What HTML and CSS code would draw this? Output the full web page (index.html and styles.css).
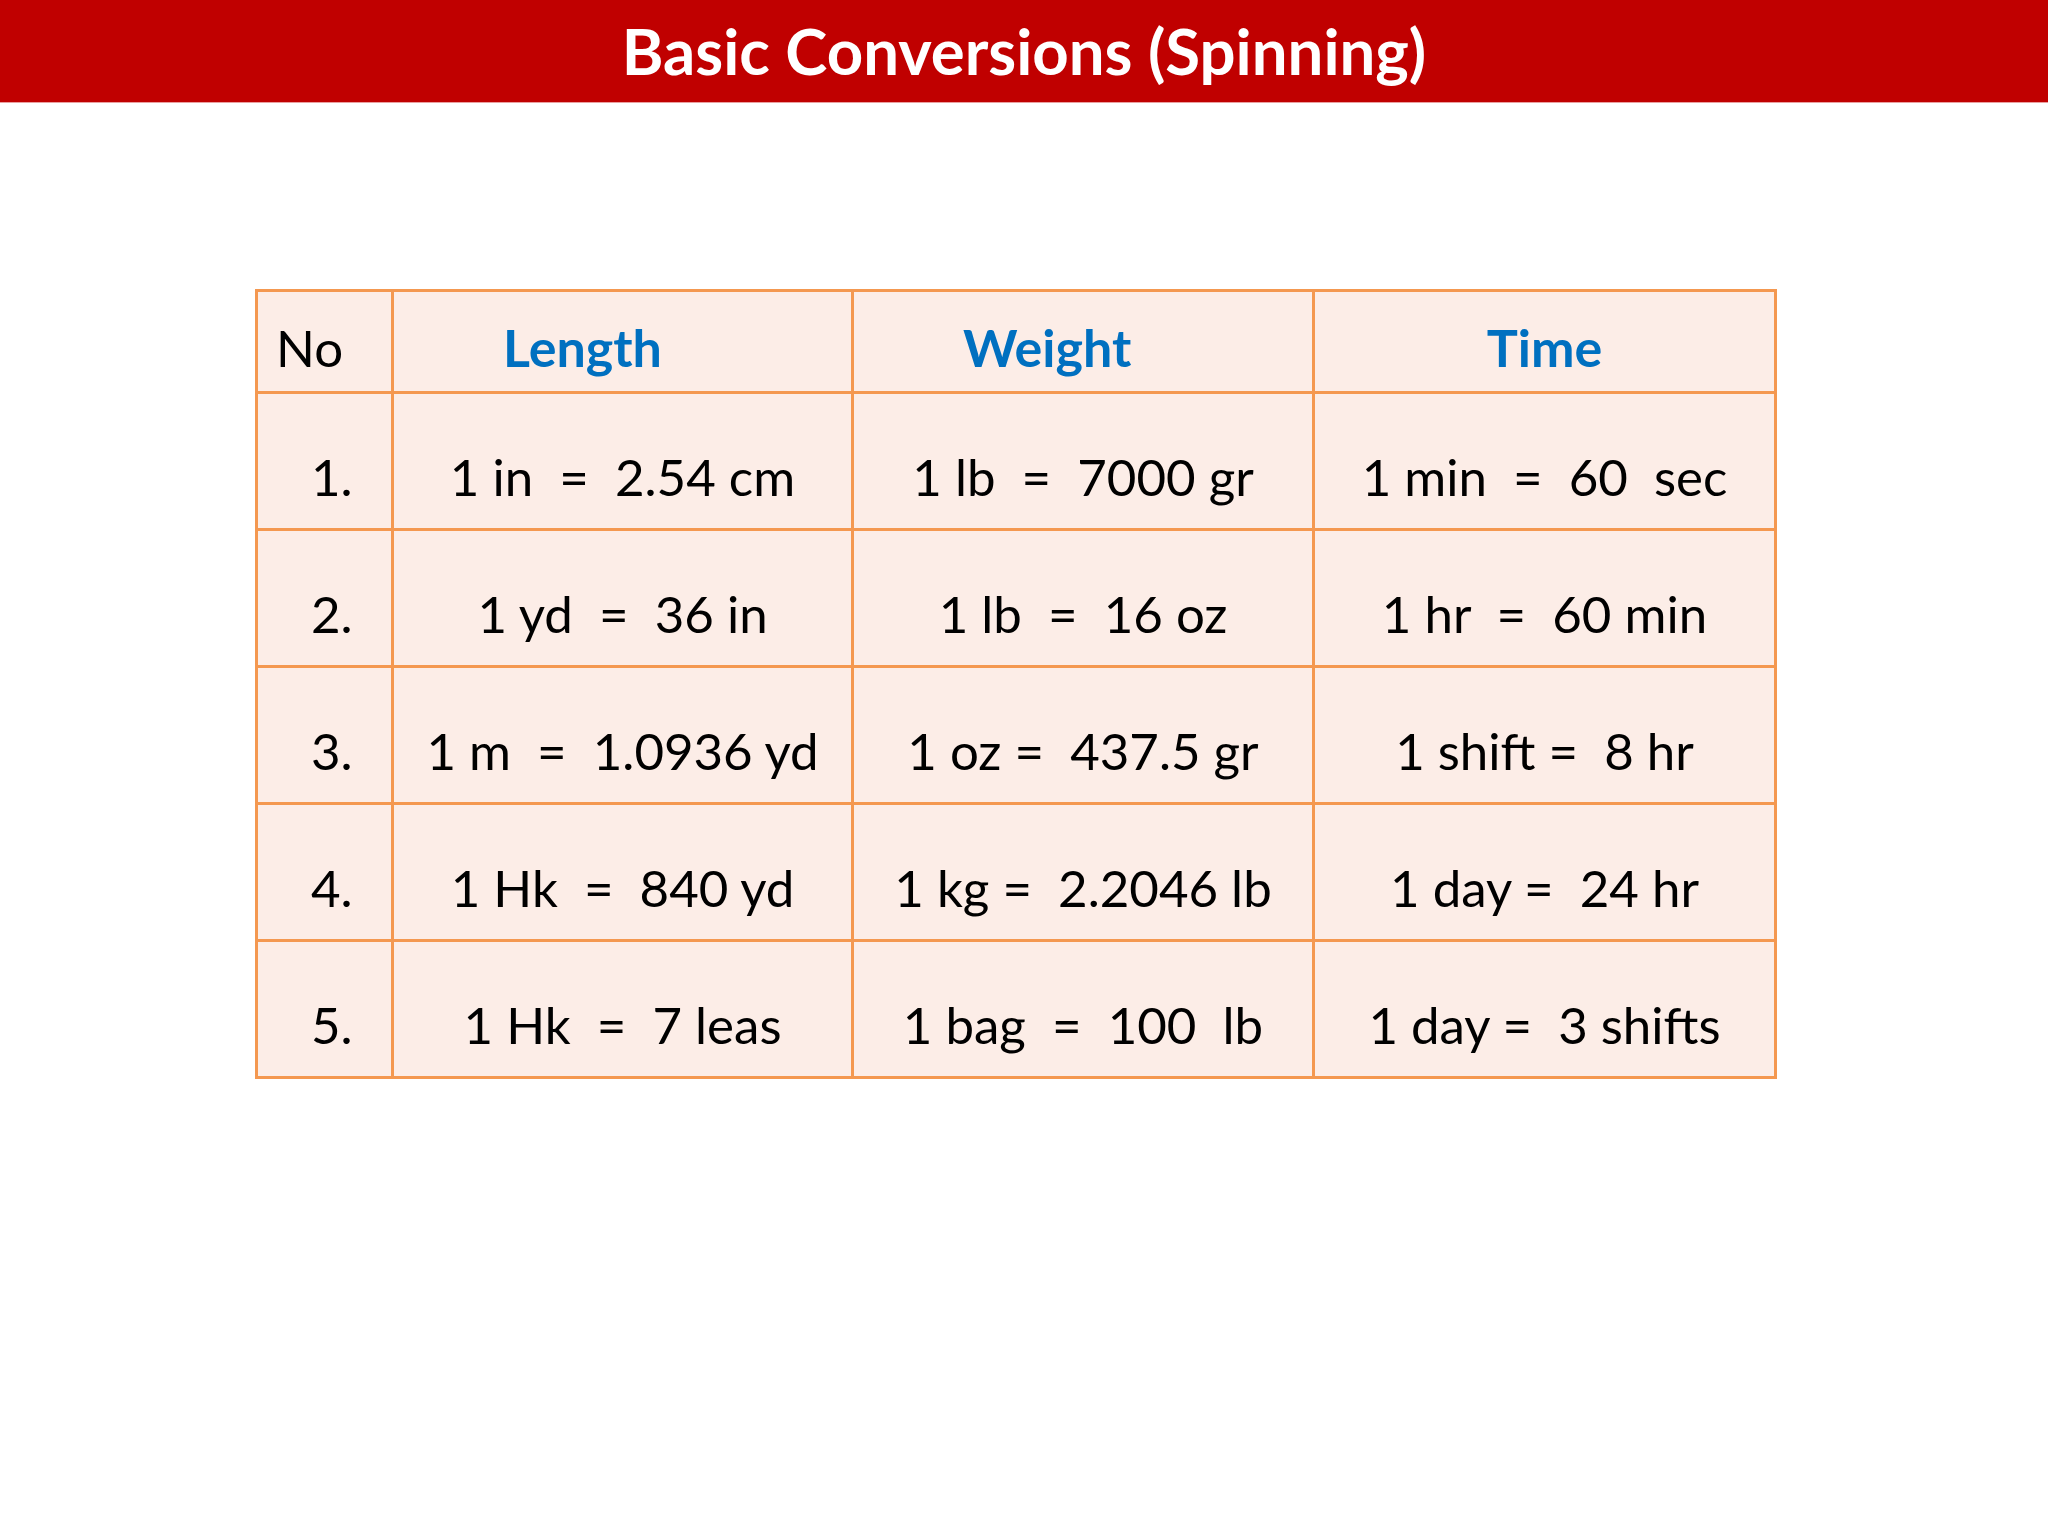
FILE: index.html
```html
<!DOCTYPE html>
<html>
<head>
<meta charset="utf-8">
<link rel="stylesheet" href="styles.css">
</head>
<body>
<header class="title-bar"><h1 class="title">Basic Conversions (Spinning)</h1></header>
<main class="content">
<table class="conv">
<colgroup><col class="c-no"><col class="c-len"><col class="c-wt"><col class="c-time"></colgroup>
<thead>
<tr class="head-row"><th class="no-head">No</th><th class="h-left">Length</th><th class="h-left">Weight</th><th class="h-center">Time</th></tr>
</thead>
<tbody>
<tr><td class="num">1.</td><td>1 in  =  2.54 cm</td><td>1 lb  =  7000 gr</td><td>1 min  =  60  sec</td></tr>
<tr><td class="num">2.</td><td>1 yd  =  36 in</td><td>1 lb  =  16 oz</td><td>1 hr  =  60 min</td></tr>
<tr><td class="num">3.</td><td>1 m  =  1.0936 yd</td><td>1 oz =  437.5 gr</td><td>1 shift =  8 hr</td></tr>
<tr><td class="num">4.</td><td>1 Hk  =  840 yd</td><td>1 kg =  2.2046 lb</td><td>1 day =  24 hr</td></tr>
<tr><td class="num">5.</td><td>1 Hk  =  7 leas</td><td>1 bag  =  100  lb</td><td>1 day =  3 shifts</td></tr>
</tbody>
</table>
</main>
</body>
</html>
```
FILE: styles.css
```css
html, body {
  margin: 0;
  padding: 0;
  background: #ffffff;
}
body {
  font-family: Lato, "Liberation Sans", sans-serif;
  color: #000000;
}
.title-bar {
  background: #C00000;
  height: 103px;
  box-sizing: border-box;
  padding-top: 13px;
  border-bottom: 1px solid #e9a0a0;
}
.title {
  margin: 0;
  text-align: center;
  color: #ffffff;
  font-family: Lato, "Liberation Sans", sans-serif;
  font-weight: 700;
  font-size: 63.5px;
  line-height: 1.2;
}
.content {
  padding: 186px 0 0 255px;
}
.conv {
  border-collapse: collapse;
  table-layout: fixed;
  width: 1519px;
  background: #FCEDE7;
}
.c-no { width: 136px; }
.c-len { width: 460px; }
.c-wt { width: 461px; }
.c-time { width: 462px; }
.conv th, .conv td {
  border: 3px solid #F49850;
  font-size: 51px;
  line-height: 1;
  vertical-align: bottom;
  white-space: pre;
  padding: 0 0 26px 0;
  text-align: center;
  font-weight: 400;
}
.head-row { height: 102px; }
.conv tbody tr { height: 137px; }
.conv th {
  padding-bottom: 18px;
  color: #0070C0;
  font-weight: 700;
  font-size: 52px;
}
.conv th.no-head {
  color: #000000;
  font-weight: 400;
  font-size: 51px;
  text-align: left;
  padding-left: 18px;
}
.conv th.h-left {
  text-align: left;
  padding-left: 109px;
}
.conv td.num {
  text-align: left;
  padding-left: 53px;
}
```
